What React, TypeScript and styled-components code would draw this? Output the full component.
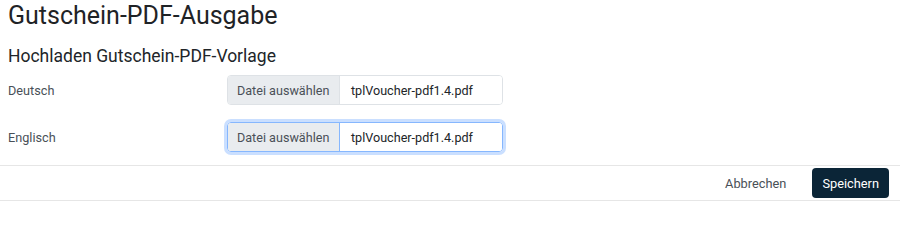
import React from 'react'
import styled, { createGlobalStyle } from 'styled-components'

const GlobalStyle = createGlobalStyle`
  body {
    margin: 0;
    background: #fff;
    font-family: Roboto, "Liberation Sans", sans-serif;
    color: #212529;
  }
`

const Page = styled.div`
  width: 900px;
  height: 202px;
  box-sizing: border-box;
  display: flex;
  flex-direction: column;
`

const Body = styled.div`
  padding: 1px 8px 0;
`

const Title = styled.h1`
  margin: 0;
  font-size: 25px;
  font-weight: 400;
  line-height: 30px;
  color: #1f2326;
`

const Subtitle = styled.h2`
  margin: 15px 0 8px;
  font-size: 17.5px;
  font-weight: 400;
  line-height: 21px;
  color: #212529;
`

const FieldList = styled.div`
  display: flex;
  flex-direction: column;
  gap: 17px;
`

const FieldRow = styled.div`
  display: grid;
  grid-template-columns: 219px 276px;
  align-items: center;
`

const Label = styled.label`
  font-size: 12.7px;
  color: #495057;
`

const FileGroup = styled.div<{ $focused?: boolean }>`
  display: flex;
  height: 30px;
  box-sizing: border-box;
  border: 1px solid ${p => (p.$focused ? '#86b7fe' : '#dee2e6')};
  border-radius: 4px;
  overflow: hidden;
  box-shadow: ${p => (p.$focused ? '0 0 0 3px rgba(13, 110, 253, 0.22)' : 'none')};
  font-size: 12.6px;
  white-space: nowrap;
`

const PickButton = styled.span<{ $focused?: boolean }>`
  display: flex;
  align-items: center;
  padding: 0 9px;
  width: 112px;
  box-sizing: border-box;
  background: #e9ecef;
  color: #495057;
  border-right: 1px solid ${p => (p.$focused ? '#86b7fe' : '#dee2e6')};
`

const FileName = styled.span`
  display: flex;
  align-items: center;
  padding: 0 11px;
  color: #212529;
  flex: 1;
  background: #fff;
`

const Footer = styled.div`
  margin-top: 13px;
  border-top: 1px solid #e6e6e6;
  border-bottom: 1px solid #e6e6e6;
  display: flex;
  justify-content: flex-end;
  align-items: center;
  gap: 26px;
  padding: 2px 11px 2px 0;
`

const Button = styled.button<{ $primary?: boolean }>`
  height: 30px;
  border: none;
  border-radius: 4px;
  padding: 0 ${p => (p.$primary ? '10px' : '0')};
  font-family: inherit;
  font-size: 12.8px;
  background: ${p => (p.$primary ? '#0b2537' : 'transparent')};
  color: ${p => (p.$primary ? '#fff' : '#495057')};
  cursor: pointer;
`

type FileFieldProps = {
  label: string
  file: string
  focused?: boolean
}

function FileField({ label, file, focused }: FileFieldProps) {
  return (
    <FieldRow>
      <Label>{label}</Label>
      <FileGroup $focused={focused}>
        <PickButton $focused={focused}>Datei auswählen</PickButton>
        <FileName>{file}</FileName>
      </FileGroup>
    </FieldRow>
  )
}

export default function App() {
  return (
    <Page>
      <GlobalStyle />
      <Body>
        <Title>Gutschein-PDF-Ausgabe</Title>
        <Subtitle>Hochladen Gutschein-PDF-Vorlage</Subtitle>
        <FieldList>
          <FileField label="Deutsch" file="tplVoucher-pdf1.4.pdf" />
          <FileField label="Englisch" file="tplVoucher-pdf1.4.pdf" focused />
        </FieldList>
      </Body>
      <Footer>
        <Button>Abbrechen</Button>
        <Button $primary>Speichern</Button>
      </Footer>
    </Page>
  )
}
